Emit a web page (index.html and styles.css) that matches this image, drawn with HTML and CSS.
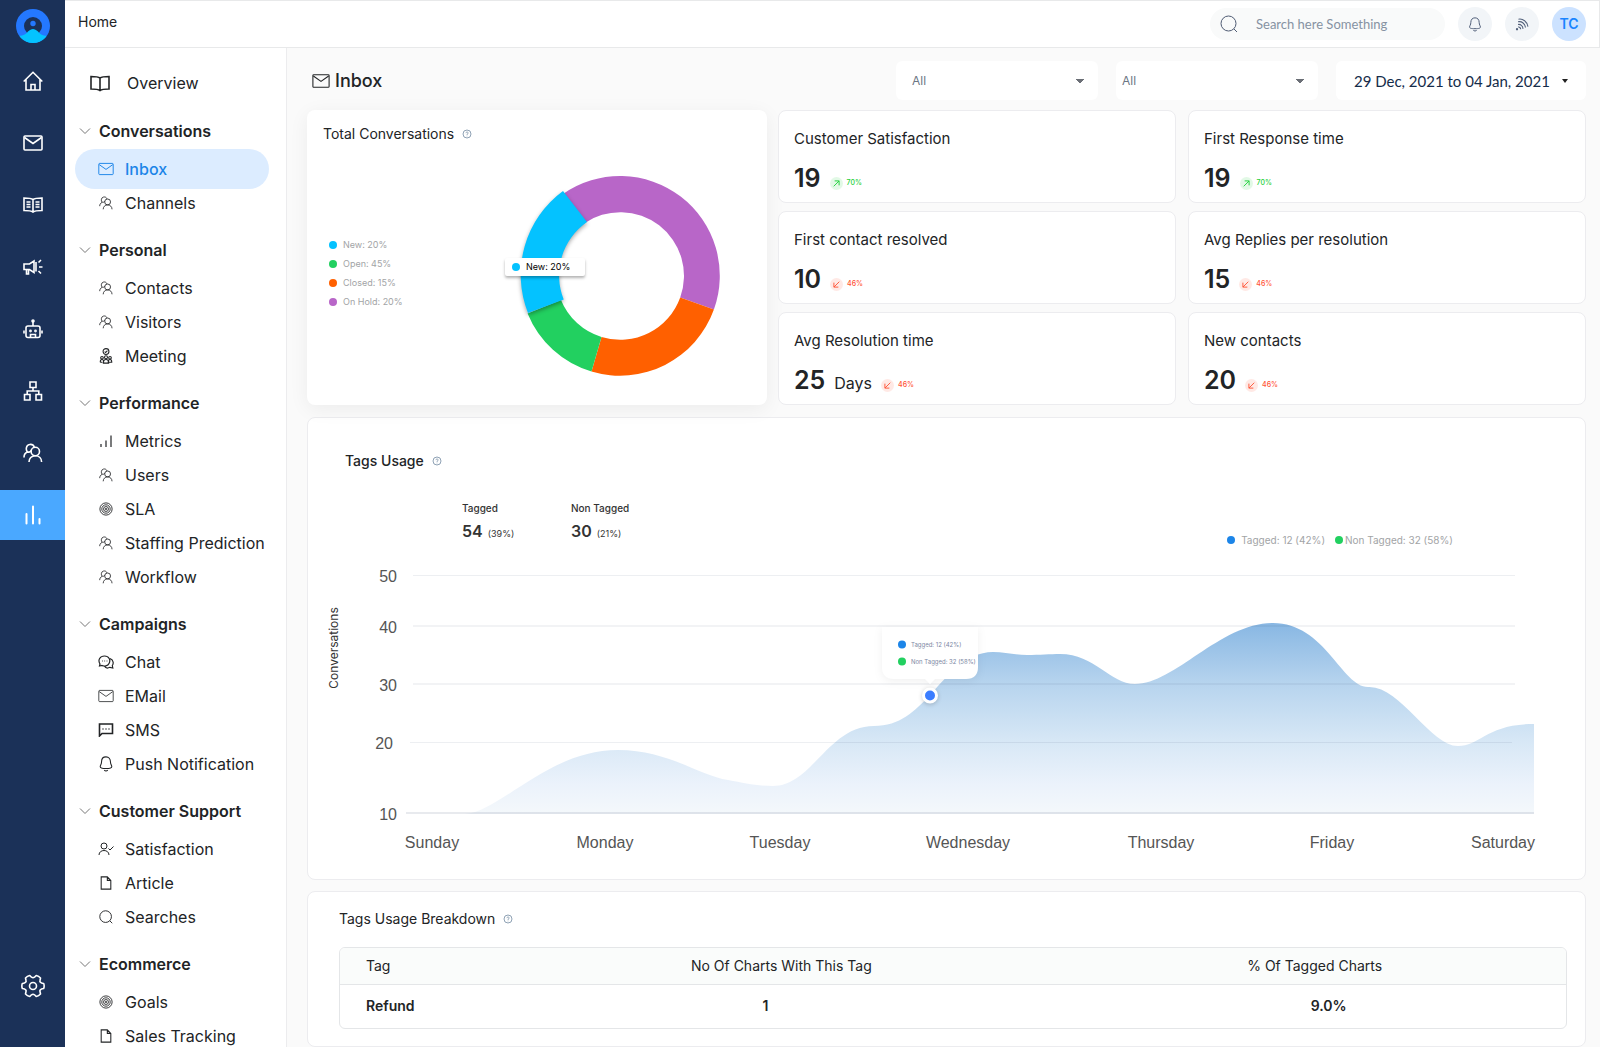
FILE: index.html
```html
<!DOCTYPE html>
<html lang="en">
<head>
<meta charset="utf-8">
<meta name="viewport" content="width=device-width, initial-scale=1">
<title>Inbox</title>
<link rel="stylesheet" href="styles.css">
</head>
<body>
<svg class="sprite" aria-hidden="true">
  <symbol id="mail" viewBox="0 0 20 16"><rect x="1" y="1" width="18" height="14" rx="1"/><path d="M1.500 2.500L10 8.500L18.500 2.500"/></symbol>
  <symbol id="users" viewBox="0 0 20 20"><circle cx="12.300" cy="8.500" r="4.200"/><path d="M6 19c0-3.500 2.500-6.300 6.300-6.300s6.300 2.800 6.300 6.300M1 14.500c0-2.500 1.200-4.500 3.400-5.400M8.300 7.500C7.500 8.800 5.500 9.500 4.500 8.800C2.500 7 3 2 6.500 1.500C9 1 10.500 2 11.300 4"/></symbol>
  <symbol id="chevron" viewBox="0 0 12 8"><path d="M1 1.500L6 6.500L11 1.500"/></symbol>
  <symbol id="book" viewBox="0 0 20 16"><path d="M10 2.500C8 1 5 1 1 1V13.500C5 13.500 8 13.500 10 15C12 13.500 15 13.500 19 13.500V1C15 1 12 1 10 2.500ZM10 2.500V15"/></symbol>
  <symbol id="target" viewBox="0 0 16 16"><circle cx="8" cy="8" r="7"/><circle cx="8" cy="8" r="4.800"/><circle cx="8" cy="8" r="2.800"/><circle cx="8" cy="8" r=".8"/></symbol>
  <symbol id="file" viewBox="0 0 14 16"><path d="M1.500 1H8.500L12.500 5V15H1.500ZM8.500 1V5H12.500"/></symbol>
  <symbol id="search" viewBox="0 0 18 18"><circle cx="8.500" cy="8.500" r="7.500"/><path d="M14 14L17 17"/></symbol>
  <symbol id="bell" viewBox="0 0 16 18"><path d="M8 1C4.800 1 3 3.200 3 6.500C3 9.500 1.500 10.500 1.500 12C1.500 13.500 3 14 8 14S14.500 13.500 14.500 12C14.500 10.500 13 9.500 13 6.500C13 3.200 11.200 1 8 1ZM6 16Q8 17.800 10 16"/></symbol>
  <symbol id="help" viewBox="0 0 10 10"><circle cx="5" cy="5" r="4"/><path d="M3.900 4.100C4 2.600 6.300 2.700 6.100 4.100C6 4.800 5 4.900 5 5.900M5 6.700V7.300"/></symbol>
  <symbol id="up" viewBox="0 0 14 14"><circle class="disc" cx="7" cy="7" r="7"/><path d="M4 10L9.800 4.200M5 4.200H9.800V9"/></symbol>
  <symbol id="down" viewBox="0 0 14 14"><circle class="disc" cx="7" cy="7" r="7"/><path d="M10 4L4.200 9.800M4.200 5V9.800H9"/></symbol>
</svg>

<div class="app">
  <nav class="rail" aria-label="Main">
    <a class="logo" href="#" aria-label="Dashboard home">
      <svg viewBox="0 0 34 34"><defs><clipPath id="disc"><circle cx="17" cy="17" r="17"/></clipPath></defs><g clip-path="url(#disc)"><rect width="34" height="34" fill="#2478ff"/><circle cx="17" cy="17" r="9" fill="#1b3158"/><circle cx="17" cy="14.500" r="2.700" fill="#2478ff"/><path d="M0 27C7 27 9 26 12 22.500C15.500 19 18.500 19 22 22.500C25 26 27 27 34 27V34H0Z" fill="#04c3ff"/></g></svg>
    </a>
    <a class="rail-link" href="#" aria-label="Home"><svg class="icon rail-icon" viewBox="0 0 20 20"><path d="M.7 10.500L10 1.300L19.300 10.500M3 8.500V19H17V8.500M8 19V13.500H12V19"/></svg></a>
    <a class="rail-link" href="#" aria-label="Mail"><svg class="icon rail-icon"><use href="#mail"/></svg></a>
    <a class="rail-link" href="#" aria-label="Articles"><svg class="icon rail-icon" viewBox="0 0 20 16"><use href="#book" width="20" height="16"/><path d="M3.500 5H7.500M3.500 7.500H7.500M3.500 10H7.500M12.500 5H16.500M12.500 7.500H16.500M12.500 10H16.500"/></svg></a>
    <a class="rail-link" href="#" aria-label="Campaigns"><svg class="icon rail-icon" viewBox="0 0 20 18"><path d="M1 6H6.500L11 3V14.500L6.500 11.500H1ZM3.500 11.500V16H5.500V12M13 4V13.500M15.500 4.500L18 2M16 9H19.500M15.500 13L18 15.500"/></svg></a>
    <a class="rail-link" href="#" aria-label="Bots"><svg class="icon rail-icon" viewBox="0 0 20 20"><rect x="3" y="7" width="14" height="11.500" rx="2"/><path d="M10 7V2M1 11.500V14.500M19 11.500V14.500M7.500 18V15.500H12.500V18"/><circle cx="10" cy="2" r="1"/><circle cx="7.500" cy="12" r=".6"/><circle cx="12.500" cy="12" r=".6"/></svg></a>
    <a class="rail-link" href="#" aria-label="Workflows"><svg class="icon rail-icon" viewBox="0 0 20 20"><path d="M7 1H13V6.500H7ZM1.500 13.500H7V19H1.500ZM13 13.500H18.500V19H13ZM10 6.500V10M4.200 13.500V10H15.800V13.500"/></svg></a>
    <a class="rail-link" href="#" aria-label="Contacts"><svg class="icon rail-icon"><use href="#users"/></svg></a>
    <a class="rail-link active" href="#" aria-label="Reports" aria-current="page"><svg class="icon rail-icon thick" viewBox="0 0 20 20"><path d="M3.500 9V18.500M10 1.500V18.500M16.500 14V18.500"/></svg></a>
    <a class="rail-link settings" href="#" aria-label="Settings"><svg class="icon gear" viewBox="0 0 24 24"><circle cx="12" cy="12" r="3.500"/><path d="M22.700 9.500Q23.600 12 22.700 14.500Q21 14.500 19.800 15.500Q18.500 16.300 19 17.500L19.500 20Q17.800 21.900 15.200 22.500L13.500 20.800Q12 19.800 10.500 20.800L8.800 22.500Q6.200 21.900 4.500 20L5 17.500Q5.500 16.300 4.200 15.500Q3 14.500 1.300 14.500Q.4 12 1.300 9.500Q3 9.500 4.200 8.500Q5.500 7.700 5 6.500L4.500 4Q6.200 2.100 8.800 1.500L10.500 3.200Q12 4.200 13.500 3.200L15.200 1.500Q17.800 2.100 19.500 4L19 6.500Q18.500 7.700 19.800 8.500Q21 9.500 22.700 9.500Z"/></svg></a>
  </nav>

  <div class="shell">
    <header class="topbar">
      <a class="crumb" href="#">Home</a>
      <label class="search"><svg class="icon"><use href="#search"/></svg><input type="search" aria-label="Search" placeholder="Search here Something"></label>
      <button class="round" type="button" aria-label="Notifications"><svg class="icon"><use href="#bell"/></svg></button>
      <button class="round" type="button" aria-label="Feed"><svg class="icon feed" viewBox="0 0 16 16"><path d="M4 2.500C9 1.500 14 5.500 14.800 11M3.500 5.500C8 4.500 11.500 8 12 12M3.500 8.500C6.500 8 8.800 10.500 9.200 13.500M3.500 11.500C5 11 6.500 12.500 6.500 14"/><circle cx="2.300" cy="14" r=".7"/></svg></button>
      <button class="round avatar" type="button">TC</button>
    </header>

    <div class="body">
      <aside class="sidebar">
        <a class="overview" href="#"><svg class="icon"><use href="#book"/></svg>Overview</a>
        <section><h2><svg class="icon"><use href="#chevron"/></svg>Conversations</h2>
          <a class="item selected" href="#"><svg class="icon"><use href="#mail"/></svg>Inbox</a>
          <a class="item" href="#"><svg class="icon"><use href="#users"/></svg>Channels</a></section>
        <section><h2><svg class="icon"><use href="#chevron"/></svg>Personal</h2>
          <a class="item" href="#"><svg class="icon"><use href="#users"/></svg>Contacts</a>
          <a class="item" href="#"><svg class="icon"><use href="#users"/></svg>Visitors</a>
          <a class="item" href="#"><svg class="icon tall" viewBox="0 0 16 18"><circle cx="8" cy="4" r="3.300"/><path d="M6.500 4L7.600 5.100L9.600 3"/><circle cx="3.500" cy="11" r="1.500"/><circle cx="8" cy="10.500" r="1.700"/><circle cx="12.500" cy="11" r="1.500"/><path d="M1.500 16C1.500 12 5.500 12 5.500 16M5 17C5 11.500 11 11.500 11 17ZM10.500 16C10.500 12 14.500 12 14.500 16ZM1.500 16H4"/></svg>Meeting</a></section>
        <section><h2><svg class="icon"><use href="#chevron"/></svg>Performance</h2>
          <a class="item" href="#"><svg class="icon" viewBox="0 0 14 14"><path d="M2 10V13M7 6.500V13M12 1.500V13"/></svg>Metrics</a>
          <a class="item" href="#"><svg class="icon"><use href="#users"/></svg>Users</a>
          <a class="item" href="#"><svg class="icon fine"><use href="#target"/></svg>SLA</a>
          <a class="item" href="#"><svg class="icon"><use href="#users"/></svg>Staffing Prediction</a>
          <a class="item" href="#"><svg class="icon"><use href="#users"/></svg>Workflow</a></section>
        <section><h2><svg class="icon"><use href="#chevron"/></svg>Campaigns</h2>
          <a class="item" href="#"><svg class="icon" viewBox="0 0 16 14"><path d="M1.500 11L2 9C-.5 5 2 1 6.500 1S13 5 11 8.500C10 11 6 11.500 4 10.500ZM12 3.500C16 5 15.500 9 14.300 10.500L14.800 13L12 12.300C10 13.300 7.500 13 6.500 11.300"/><path d="M4 6H4.800M6.300 6H7.100M8.600 6H9.400"/></svg>Chat</a>
          <a class="item" href="#"><svg class="icon fine"><use href="#mail"/></svg>EMail</a>
          <a class="item" href="#"><svg class="icon heavy" viewBox="0 0 16 14"><path d="M1.500 13V1H14.500V10.500H4Z"/><path d="M4.500 6H5.500M7.500 6H8.500M10.500 6H11.500"/></svg>SMS</a>
          <a class="item" href="#"><svg class="icon tall"><use href="#bell"/></svg>Push Notification</a></section>
        <section><h2><svg class="icon"><use href="#chevron"/></svg>Customer Support</h2>
          <a class="item" href="#"><svg class="icon fine" viewBox="0 0 16 14"><circle cx="6" cy="4" r="3"/><path d="M1 13C1 7 11 7 11 13M10.500 6.500L12 8L15.500 4.500"/></svg>Satisfaction</a>
          <a class="item" href="#"><svg class="icon"><use href="#file"/></svg>Article</a>
          <a class="item" href="#"><svg class="icon"><use href="#search"/></svg>Searches</a></section>
        <section><h2><svg class="icon"><use href="#chevron"/></svg>Ecommerce</h2>
          <a class="item" href="#"><svg class="icon fine"><use href="#target"/></svg>Goals</a>
          <a class="item" href="#"><svg class="icon"><use href="#file"/></svg>Sales Tracking</a></section>
      </aside>

      <main class="main">
        <div class="toolbar">
          <h1><svg class="icon"><use href="#mail"/></svg>Inbox</h1>
          <select class="filter" aria-label="Channel"><option>All</option></select>
          <select class="filter compact" aria-label="Agent"><option>All</option></select>
          <button class="dates" type="button">29 Dec, 2021 to 04 Jan, 2021<span class="caret"></span></button>
        </div>

        <div class="summary">
          <section class="total">
            <h3>Total Conversations<svg class="help"><use href="#help"/></svg></h3>
            <div class="total-body">
              <ul class="legend">
                <li><i class="dot new"></i>New: 20%</li>
                <li><i class="dot green"></i>Open: 45%</li>
                <li><i class="dot orange"></i>Closed: 15%</li>
                <li><i class="dot purple"></i>On Hold: 20%</li>
              </ul>
              <div class="donut">
                <svg viewBox="-100 -100 200 200">
                  <path fill="#b866c8" d="M-57 -82A99.700 99.700 0 0 1 93.900 33.500L60.200 21.500A63.700 63.700 0 0 0 -36 -52.500Z"/>
                  <path fill="#ff6000" d="M93.900 33.500A99.700 99.700 0 0 1 -28.500 95.500L-18.500 61A63.700 63.700 0 0 0 60.200 21.500Z"/>
                  <path fill="#22d060" d="M-28.500 95.500A99.700 99.700 0 0 1 -92.400 37.500L-59 24A63.700 63.700 0 0 0 -18.500 61Z"/>
                  <path class="raised" fill="#04c2ff" d="M-92 37A104 104 0 0 1 -57 -85L-33 -54A65 65 0 0 0 -56.300 23.500Z"/>
                </svg>
                <span class="donut-tip"><i class="dot new"></i>New: 20%</span>
              </div>
            </div>
          </section>
          <div class="kpis">
            <article class="kpi"><h3>Customer Satisfaction</h3><p><b>19</b><span class="trend good"><svg><use href="#up"/></svg>70%</span></p></article>
            <article class="kpi"><h3>First Response time</h3><p><b>19</b><span class="trend good"><svg><use href="#up"/></svg>70%</span></p></article>
            <article class="kpi"><h3>First contact resolved</h3><p><b>10</b><span class="trend bad"><svg><use href="#down"/></svg>46%</span></p></article>
            <article class="kpi"><h3>Avg Replies per resolution</h3><p><b>15</b><span class="trend bad"><svg><use href="#down"/></svg>46%</span></p></article>
            <article class="kpi"><h3>Avg Resolution time</h3><p><b>25</b><span class="unit">Days</span><span class="trend bad"><svg><use href="#down"/></svg>46%</span></p></article>
            <article class="kpi"><h3>New contacts</h3><p><b>20</b><span class="trend bad"><svg><use href="#down"/></svg>46%</span></p></article>
          </div>
        </div>

        <section class="card usage">
          <h3>Tags Usage<svg class="help"><use href="#help"/></svg></h3>
          <div class="usage-head">
            <div class="stat">Tagged<p><b>54</b>(39%)</p></div>
            <div class="stat">Non Tagged<p><b>30</b>(21%)</p></div>
            <ul class="series"><li><i class="dot blue"></i>Tagged: 12 (42%)</li><li><i class="dot green"></i>Non Tagged: 32 (58%)</li></ul>
          </div>
          <svg class="chart" viewBox="308 560 1277 300" role="img" aria-label="Conversations per weekday">
            <defs><linearGradient id="area" x1="0" y1="0" x2="0" y2="1"><stop offset="0" stop-color="#88b7e3"/><stop offset=".32" stop-color="#b7d4ee"/><stop offset=".63" stop-color="#d8e8f6"/><stop offset=".84" stop-color="#ebf2fb"/><stop offset="1" stop-color="#f4f8fb"/></linearGradient></defs>
            <path fill="url(#area)" d="M465 814C500 812 548 750 618 750C668 750 700 776 728 780C745 783 755 786 773 786C812 786 828 726 874 726C900 726 915 711 930 695S965 652 993 652C1005 652 1015 655 1027 655C1040 655 1050 654 1060 654C1095 654 1110 684 1135 684C1175 684 1220 623 1273 623C1325 623 1342 687 1368 687C1400 685 1430 746 1458 746C1480 746 1487 724 1534 724V814Z"/>
            <g class="grid"><path d="M413 575.500H1515"/><path class="double" d="M413 626H1515M413 684H1515"/><path d="M410 742.500H1512"/><path class="double base" d="M406 813H1534"/></g>
            <g class="axis" text-anchor="end"><text x="397" y="582">50</text><text x="397" y="633">40</text><text x="397" y="691">30</text><text x="393" y="749">20</text><text x="397" y="820">10</text></g>
            <g class="axis" text-anchor="middle"><text x="432" y="848">Sunday</text><text x="605" y="848">Monday</text><text x="780" y="848">Tuesday</text><text x="968" y="848">Wednesday</text><text x="1161" y="848">Thursday</text><text x="1332" y="848">Friday</text><text x="1503" y="848">Saturday</text></g>
            <text class="axis-title" transform="translate(338 648) rotate(-90)" text-anchor="middle">Conversations</text>
            <path class="bubble" d="M882 627H978V667Q978 679 966 679H935L930 684L925 679H894Q882 679 882 667Z"/>
            <circle cx="902" cy="644.500" r="4" fill="#1c85e8"/><circle cx="902" cy="661.500" r="4" fill="#22d060"/>
            <text class="bubble-text" x="911" y="647">Tagged: 12 (42%)</text><text class="bubble-text" x="911" y="664">Non Tagged: 32 (58%)</text>
            <circle class="marker" cx="930" cy="695.500" r="6.500"/>
          </svg>
        </section>

        <section class="card breakdown">
          <h3>Tags Usage Breakdown<svg class="help"><use href="#help"/></svg></h3>
          <div class="table-wrap">
            <table>
              <colgroup><col class="c-tag"><col class="c-count"><col class="c-share"></colgroup>
              <thead><tr><th>Tag</th><th>No Of Charts With This Tag</th><th>% Of Tagged Charts</th></tr></thead>
              <tbody><tr><td>Refund</td><td>1</td><td>9.0%</td></tr></tbody>
            </table>
          </div>
        </section>
      </main>
    </div>
  </div>
</div>
</body>
</html>
```
FILE: styles.css
```css
* { box-sizing: border-box; }
body { margin: 0; font-family: Inter, "Liberation Sans", sans-serif; font-size: 14px; line-height: 20px; color: #222426; }
h1, h2, h3, p, ul { margin: 0; padding: 0; font-weight: 400; font-size: inherit; }
ul { list-style: none; }
a { color: inherit; text-decoration: none; }
button, select, input { font: inherit; color: inherit; border: 0; padding: 0; background: none; }
.sprite { display: none; }
.icon { width: 16px; height: 16px; flex: none; fill: none; stroke: currentColor; stroke-width: 1.2; }

.app { display: flex; height: 100vh; overflow: hidden; }

/* Dark icon rail */
.rail { width: 65px; flex: none; display: flex; flex-direction: column; background: #1b3158; color: #fff; }
.logo { margin: 9px auto 13px; height: 34px; width: 34px; }
.logo svg { display: block; width: 34px; height: 34px; }
.rail-link { height: 50px; margin-bottom: 12px; flex: none; display: grid; place-items: center; }
.rail-link.active { background: #4aa8ff; margin-bottom: 0; }
.rail-link.settings { margin: auto 0 36px; }
.rail-icon { width: 20px; height: 20px; stroke-width: 1.6; }
.thick { stroke-width: 2; stroke-linecap: round; }
.gear { width: 24px; height: 24px; stroke-width: 1.6; stroke-linejoin: round; }

.shell { flex: 1; min-width: 0; display: flex; flex-direction: column; }

/* Top bar */
.topbar { height: 48px; flex: none; display: flex; align-items: center; gap: 13px; padding: 0 13px; border: 1px solid #e8e9ea; border-left: 0; background: #fff; }
.crumb { margin-right: auto; padding-bottom: 4px; }
.search { width: 235px; height: 32px; display: flex; align-items: center; gap: 18px; padding: 0 10px; border-radius: 16px; background: #f9fafa; color: #4f5b73; }
.search .icon { width: 18px; height: 18px; stroke-width: 1; }
.search input { flex: 1; min-width: 0; outline: 0; font-family: Lato, sans-serif; font-size: 13px; }
.search input::placeholder { color: #8692a2; opacity: 1; }
.round { width: 34px; height: 34px; flex: none; display: grid; place-items: center; border-radius: 50%; background: #f2f5f8; color: #52607a; }
.round .icon { height: 15px; stroke-width: 1.2; }
.round .feed { width: 14px; height: 14px; }
.avatar { background: #cce2ff; color: #1a85ff; font-weight: 600; }

.body { flex: 1; min-height: 0; display: flex; }

/* Sidebar */
.sidebar { width: 222px; flex: none; overflow-y: auto; scrollbar-width: none; padding: 17px 0; border-right: 1px solid #ececee; background: #fff; font-size: 16px; white-space: nowrap; }
.overview { display: flex; align-items: center; gap: 17px; height: 36px; padding-left: 25px; }
.overview .icon { width: 20px; height: 17px; stroke-width: 1.6; }
.sidebar section { margin-top: 13px; }
.sidebar h2 { display: flex; align-items: center; gap: 8px; height: 34px; margin-bottom: 4px; padding-left: 14px; font-size: 16px; font-weight: 600; }
.sidebar h2 .icon { width: 12px; height: 8px; stroke-width: 1; color: #777; }
.item { display: flex; align-items: center; gap: 11px; height: 34px; margin: 0 17px 0 10px; padding-left: 23px; }
.item .icon { height: 14px; }
.item .tall { height: 16px; }
.item .fine { stroke-width: 1; }
.item .heavy { stroke-width: 1.6; }
.selected { height: 40px; margin-top: -3px; margin-bottom: -3px; border-radius: 20px; background: #dcecff; color: #1c85e8; font-weight: 500; }

/* Main area */
.main { flex: 1; min-width: 0; overflow-y: auto; scrollbar-width: none; padding: 13px 14px 0 20px; background: #fafafa; }
.toolbar { display: flex; align-items: center; gap: 18px; height: 39px; margin-bottom: 10px; }
h1 { display: flex; align-items: center; gap: 5px; margin-right: auto; padding-left: 5px; font-size: 18px; font-weight: 500; }
h1 .icon { width: 18px; height: 16px; }
.filter { appearance: none; width: 202px; height: 39px; padding: 0 16px; border-radius: 6px; font-size: 12px; color: #6c7684; background: linear-gradient(to bottom right, #6b6f76 50%, transparent 51%) right 14px center / 4px 4px no-repeat, linear-gradient(to bottom left, #6b6f76 50%, transparent 51%) right 18px center / 4px 4px no-repeat, #fff; }
.compact { padding-left: 6px; }
.dates { width: 250px; height: 39px; display: flex; align-items: center; justify-content: space-between; padding: 0 18px; border-radius: 6px; background: #fff; color: #152c4a; font-family: Lato, sans-serif; font-size: 15px; white-space: nowrap; }
.caret { border: 3px solid transparent; border-top: 4px solid #222; border-bottom: 0; }

.summary { display: grid; grid-template-columns: 460fr 808fr; gap: 11px; margin-bottom: 12px; }
.total { padding: 14px 16px 0; border-radius: 8px; background: #fff; box-shadow: 0 4px 20px rgba(0, 0, 0, .06); }
.help { width: 10px; height: 10px; margin-left: 8px; fill: none; stroke: #8fa2b5; stroke-width: 1; }
.total-body { display: flex; align-items: center; justify-content: space-between; margin-top: 32px; padding: 0 31px 0 6px; }
.legend { margin-bottom: 6px; font-size: 9px; line-height: 19px; color: #a2a4a6; }
.dot { display: inline-block; width: 8px; height: 8px; margin-right: 6px; border-radius: 50%; vertical-align: middle; position: relative; top: -1px; }
.new { background: #04c2ff; }
.green { background: #22d060; }
.orange { background: #ff6000; }
.purple { background: #b866c8; }
.blue { background: #1c85e8; }
.donut { position: relative; width: 200px; height: 200px; }
.donut svg { display: block; width: 100%; height: 100%; overflow: visible; }
.raised { filter: drop-shadow(0 2px 2px rgba(0, 0, 0, .35)); }
.donut-tip { position: absolute; left: -15px; top: 82px; width: 80px; height: 18px; padding-left: 7px; border-radius: 2px; background: #fff; color: #000; font-size: 9px; line-height: 18px; box-shadow: 0 2px 3px rgba(0, 0, 0, .3); }

.kpis { display: grid; grid-template-columns: 1fr 1fr; gap: 8px 12px; }
.kpi { min-height: 93px; padding: 18px 15px 0; border: 1px solid #ececef; border-radius: 8px; background: #fff; }
.kpi h3 { font-size: 15px; }
.kpi p { display: flex; align-items: baseline; gap: 9px; height: 30px; margin-top: 14px; line-height: 30px; }
.kpi b { font-size: 25px; font-weight: 600; }
.unit { font-size: 16px; }
.trend { display: flex; align-items: center; gap: 4px; align-self: flex-end; margin-bottom: 3px; font-size: 7px; line-height: 14px; font-weight: 500; }
.trend svg { width: 13px; height: 13px; fill: none; stroke: currentColor; }
.disc { fill: currentColor; stroke: none; opacity: .13; }
.good { color: #1fd03a; }
.bad { color: #ff5436; }

.card { border: 1px solid #ececef; border-radius: 8px; background: #fff; }
.usage { padding: 33px 0 19px; margin-bottom: 11px; }
.usage h3 { padding-left: 37px; font-weight: 500; }
.usage-head { display: flex; height: 46px; margin: 30px 0 13px; padding: 0 132px 0 154px; font-size: 10px; line-height: 14px; font-weight: 500; color: #333; }
.stat { width: 109px; }
.stat p { margin-top: 5px; font-size: 9px; line-height: 22px; }
.stat b { margin-right: 5px; font-size: 16px; font-weight: 600; }
.series { display: flex; align-self: flex-end; gap: 10px; margin-left: auto; font-weight: 400; color: #a2a4a6; white-space: nowrap; }
.series .green { margin-right: 2px; }
.chart { display: block; width: 100%; height: auto; }
.grid { fill: none; stroke: #1b3158; stroke-opacity: .08; }
.double { stroke-width: 2; stroke-opacity: .06; }
.base { stroke-opacity: .1; }
.axis { font-family: "Liberation Sans", sans-serif; font-size: 16px; fill: #555; }
.axis-title { font-size: 12px; fill: #333; }
.bubble { fill: #fff; filter: drop-shadow(0 2px 4px rgba(0, 0, 0, .06)); }
.bubble-text { font-size: 6px; fill: #7d88a3; }
.marker { fill: #3b7dff; stroke: #fff; stroke-width: 3; filter: drop-shadow(0 1px 2px rgba(0, 0, 0, .2)); }

.breakdown { padding: 17px 18px 17px 31px; }
.table-wrap { margin-top: 18px; border: 1px solid #e4e6e8; border-radius: 6px; overflow: hidden; }
table { width: 100%; border-collapse: collapse; table-layout: fixed; }
.c-tag { width: 13%; }
.c-count { width: 46%; }
th { height: 36px; padding: 0; border-bottom: 1px solid #e4e6e8; background: #fafcfb; font-weight: 400; }
td { height: 44px; padding: 0; text-align: center; font-weight: 600; }
th:first-child, td:first-child { padding-left: 26px; text-align: left; }
td:nth-child(2) { padding-right: 32px; }
td:nth-child(3) { padding-left: 28px; }
```
